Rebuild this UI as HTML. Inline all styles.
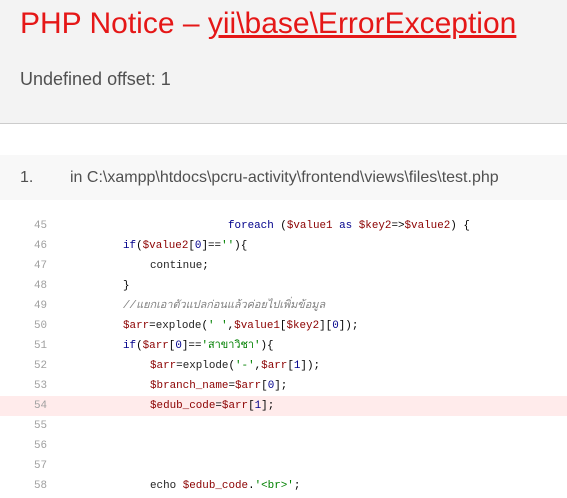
<!DOCTYPE html>
<html><head><meta charset="utf-8"><style>
body{margin:0;width:567px;height:498px;overflow:hidden;background:#fff;font-family:"Liberation Sans",Arial,sans-serif}
.hdr{position:absolute;left:0;top:0;width:567px;height:123px;background:#f3f3f3;border-bottom:1px solid #ccc}
h1{position:absolute;left:20px;top:6px;margin:0;font-weight:normal;font-size:30px;color:#e51717;white-space:nowrap;line-height:36px}
h1 a{color:#e51717;text-decoration:underline}
h2{position:absolute;left:20px;top:67px;margin:0;font-weight:normal;font-size:18px;color:#505050;line-height:24px}
.file{position:absolute;left:0;top:155px;width:567px;height:45px;background:#f8f8f8;font-size:16px;color:#505050;line-height:45px}
.code{position:absolute;left:0;top:216px;width:567px;font-family:"Liberation Mono","Noto Sans CJK SC",monospace;font-size:10.9px}
.l{position:relative;height:20px;line-height:20px;white-space:pre}
.n{position:absolute;left:34px;color:#a0a0a0}
.t{position:absolute;color:#000}
.hl{background:#ffebeb}
.k{color:#00008b}.f{color:#222}.v{color:#8b0000}.s{color:#008000}.c{color:#808080;font-style:italic}.d{color:#00008b}
</style></head><body>
<div class="hdr"><h1>PHP Notice – <a>yii\base\ErrorException</a></h1><h2>Undefined offset: 1</h2></div>
<div class="file"><span style="position:absolute;left:20px">1.</span><span style="position:absolute;left:70px">in C:\xampp\htdocs\pcru-activity\frontend\views\files\test.php</span></div>
<div class="code">
<div class="l"><span class="n">45</span><span class="t" style="left:228px"><span class="k">foreach</span> (<span class="v">$value1</span> <span class="k">as</span> <span class="v">$key2</span>=&gt;<span class="v">$value2</span>) {</span></div>
<div class="l"><span class="n">46</span><span class="t" style="left:123px"><span class="k">if</span>(<span class="v">$value2</span>[<span class="d">0</span>]==<span class="s">''</span>){</span></div>
<div class="l"><span class="n">47</span><span class="t" style="left:150px"><span class="f">continue</span>;</span></div>
<div class="l"><span class="n">48</span><span class="t" style="left:123px">}</span></div>
<div class="l"><span class="n">49</span><span class="t c" style="left:123px">//แยกเอาตัวแปลก่อนแล้วค่อยไปเพิ่มข้อมูล</span></div>
<div class="l"><span class="n">50</span><span class="t" style="left:123px"><span class="v">$arr</span>=<span class="f">explode</span>(<span class="s">' '</span>,<span class="v">$value1</span>[<span class="v">$key2</span>][<span class="d">0</span>]);</span></div>
<div class="l"><span class="n">51</span><span class="t" style="left:123px"><span class="k">if</span>(<span class="v">$arr</span>[<span class="d">0</span>]==<span class="s">'สาขาวิชา'</span>){</span></div>
<div class="l"><span class="n">52</span><span class="t" style="left:150px"><span class="v">$arr</span>=<span class="f">explode</span>(<span class="s">'-'</span>,<span class="v">$arr</span>[<span class="d">1</span>]);</span></div>
<div class="l"><span class="n">53</span><span class="t" style="left:150px"><span class="v">$branch_name</span>=<span class="v">$arr</span>[<span class="d">0</span>];</span></div>
<div class="l hl"><span class="n">54</span><span class="t" style="left:150px"><span class="v">$edub_code</span>=<span class="v">$arr</span>[<span class="d">1</span>];</span></div>
<div class="l"><span class="n">55</span></div>
<div class="l"><span class="n">56</span></div>
<div class="l"><span class="n">57</span></div>
<div class="l"><span class="n">58</span><span class="t" style="left:150px"><span class="f">echo</span> <span class="v">$edub_code</span>.<span class="s">'&lt;br&gt;'</span>;</span></div>
</div>
</body></html>
